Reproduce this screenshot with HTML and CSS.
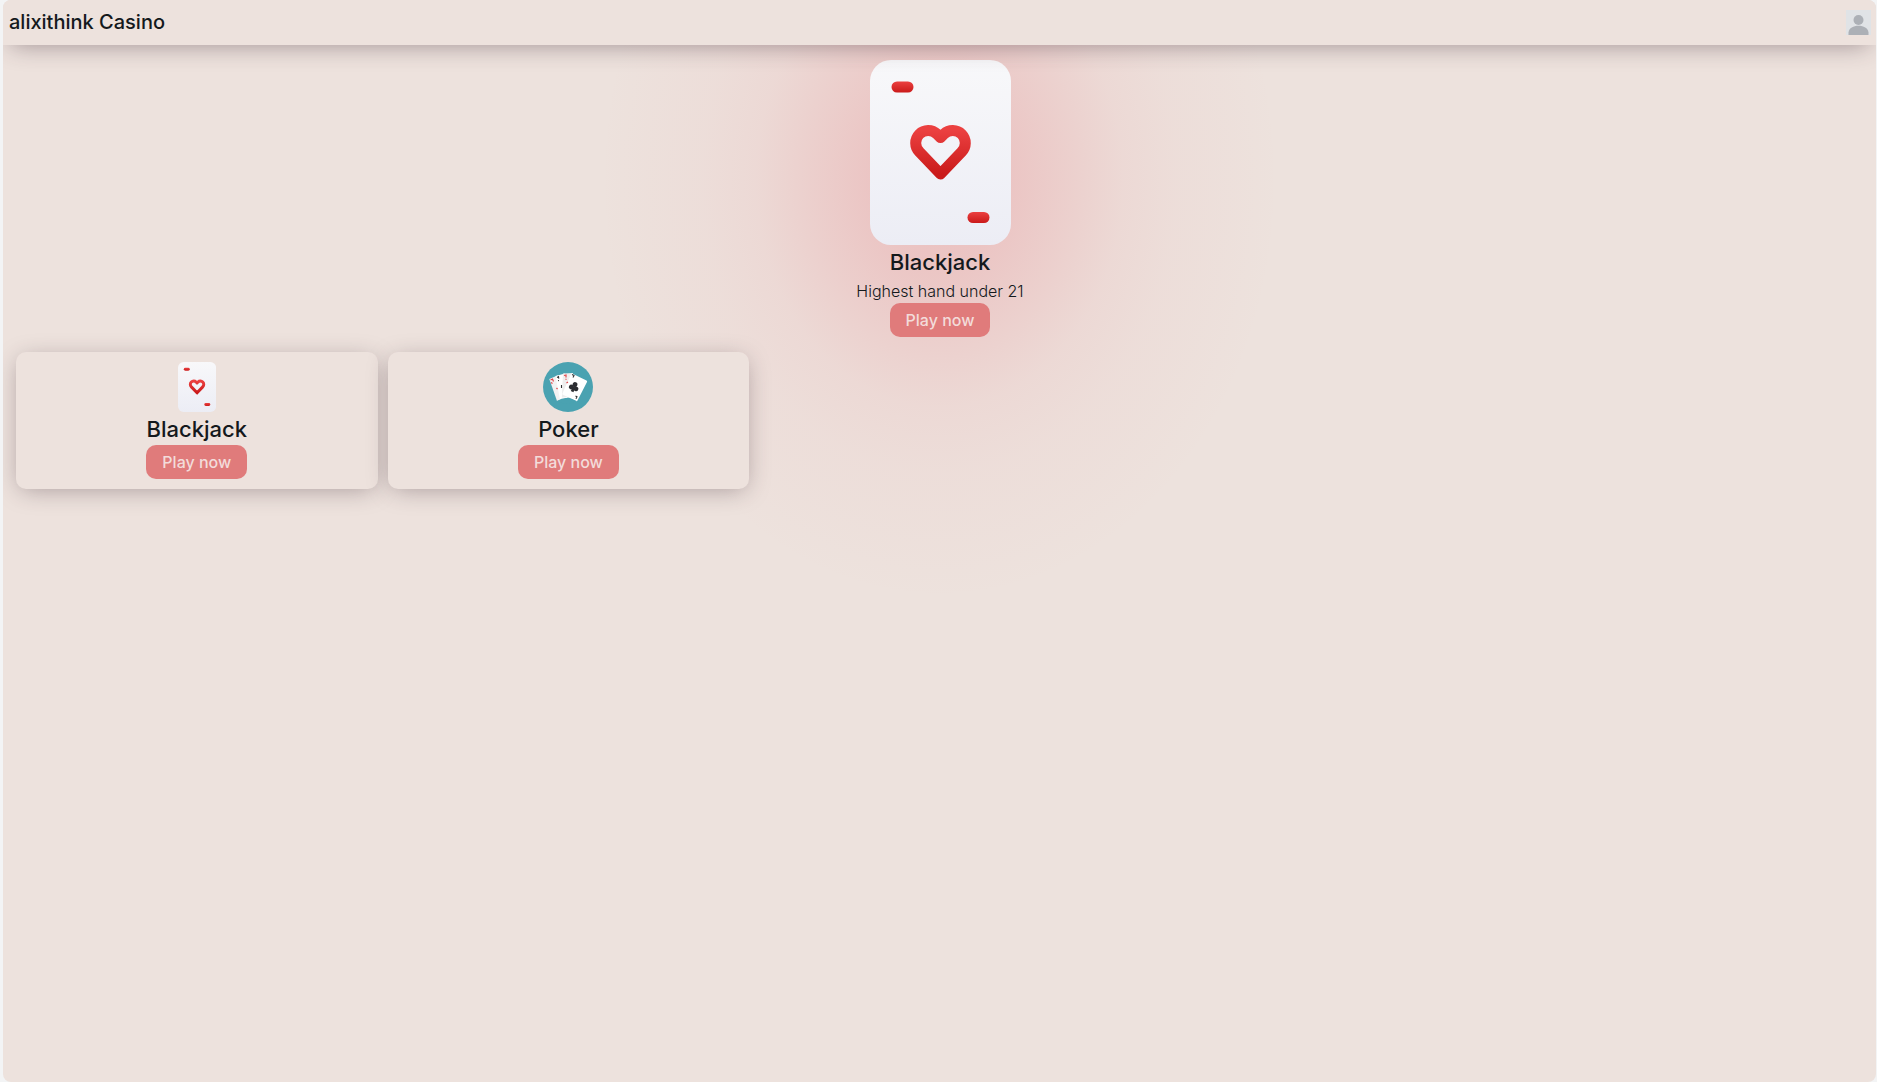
FILE: index.html
```html
<!DOCTYPE html>
<html lang="en">

<head>
    <meta charset="UTF-8">
    <meta name="viewport" content="width=device-width, initial-scale=1.0">
    <title>alixithink Casino</title>
    <link rel="stylesheet" href="styles.css">
</head>

<body>

    <!-- shared artwork -->
    <svg class="defs" width="0" height="0" aria-hidden="true">
        <defs>
            <linearGradient id="paper" x1="0" y1="0" x2="0" y2="1">
                <stop offset="0" stop-color="#f8f8fa" />
                <stop offset="1" stop-color="#ecedf5" />
            </linearGradient>
            <linearGradient id="red" x1="0" y1="0" x2="0" y2="1">
                <stop offset="0" stop-color="#eb4040" />
                <stop offset="1" stop-color="#ca1a1a" />
            </linearGradient>
        </defs>
        <symbol id="blackjack" viewBox="0 0 141 185">
            <rect width="141" height="185" rx="21" fill="url(#paper)" />
            <rect x="21.5" y="21.5" width="22" height="11" rx="5.5" fill="url(#red)" />
            <rect x="97.5" y="152" width="22" height="11" rx="5.5" fill="url(#red)" />
            <path d="M70.5 77.5L67 74A12.5 12.5 0 0 0 49.5 92L70.5 114L91.5 92A12.5 12.5 0 0 0 74 74Z" fill="none" stroke="url(#red)" stroke-width="11" stroke-linejoin="round" />
        </symbol>
    </svg>

    <div class="page">
        <header class="navbar">
            <h1>alixithink Casino</h1>
            <svg class="avatar" viewBox="0 0 25 25" role="img" aria-label="Profile">
                <rect width="25" height="25" fill="#e0e3e6" />
                <circle cx="12.5" cy="10" r="5" fill="#acb0b6" />
                <path d="M2.5 25V22.500C3 18 7.500 15.800 12.500 15.800S22 18 22.500 22.500V25Z" fill="#acb0b6" />
            </svg>
        </header>

        <main>
            <section class="featured">
                <svg class="cover" role="img" aria-label="Playing card"><use href="#blackjack" /></svg>
                <h2>Blackjack</h2>
                <p>Highest hand under 21</p>
                <button type="button">Play now</button>
            </section>

            <section class="games">
                <article class="game">
                    <svg class="icon" viewBox="0 0 141 185" aria-hidden="true"><use href="#blackjack" /></svg>
                    <h2>Blackjack</h2>
                    <button type="button">Play now</button>
                </article>

                <article class="game">
                    <svg class="icon" viewBox="0 0 50 50" aria-hidden="true">
                        <circle cx="25" cy="25" r="25" fill="#4aa2b1" />
                        <path d="M6.300 17L15 13.200L24 35.500L14 39Z" fill="#f3f2f2" />
                        <path d="M12.500 14L22 11.500L27 35L17 37.500Z" fill="#fff" />
                        <path d="M20 11.500L30 11L29 35L18.800 35.500Z" fill="#eeeeee" />
                        <path d="M28.500 11.300L43.500 18.500Q44.500 19 44 20L34.500 38.500Q34 39.500 33 39L20 32.800Q19 32.300 19.500 31.300Z" fill="#fff" />
                        <path d="M14 39Q23 33 33.500 39Q24 44 14 39Z" fill="#4aa2b1" />
                        <g fill="none" stroke="#e0474c" stroke-width="1.200">
                            <path d="M7.500 18l2-1 1 2.500M8 20.500l1.500 1M21 13.500l2-.5v2.500M22.500 17l1 .5M23.500 21l1.500-1M13.500 26l1 1.200" />
                        </g>
                        <g fill="none" stroke="#333" stroke-width="1.100">
                            <path d="M14 15.500l1.500-.8.3 2M15 18.500l1 .2M29 12.500l2 1-1 2M18.500 23v3M32.500 34l1.500.8-1 2" />
                        </g>
                        <g fill="#2b2d31" transform="rotate(22 31 25)">
                            <circle cx="31" cy="22.300" r="2.400" />
                            <circle cx="28.500" cy="26" r="2.400" />
                            <circle cx="33.500" cy="26" r="2.400" />
                            <path d="M30.300 23h1.400L32.500 30h-3Z" />
                        </g>
                    </svg>
                    <h2>Poker</h2>
                    <button type="button">Play now</button>
                </article>
            </section>
        </main>
    </div>

</body>

</html>
```
FILE: styles.css
```css
* {
    box-sizing: border-box;
}

body {
    margin: 0;
    padding: 0 1px 0 3px;
    background-color: #f3f4f5;
    font-family: Inter, sans-serif;
    font-size: 16px;
    color: #14191c;
}

h1,
h2,
p {
    margin: 0;
}

.defs {
    position: absolute;
}

.page {
    display: flex;
    flex-direction: column;
    min-height: 100vh;
    border-radius: 8px;
    overflow: hidden;
    background-color: #ede2dd;
}

.navbar {
    display: flex;
    justify-content: space-between;
    align-items: center;
    height: 45px;
    padding: 0 5px 0 6px;
    background-color: #ede2dd;
    box-shadow: 0 8px 24px -8px rgba(60, 40, 50, 0.45);
    z-index: 1;
}

h1 {
    padding-bottom: 2px;
    font-size: 20px;
    font-weight: 500;
    line-height: 42px;
}

.avatar {
    width: 25px;
    height: 25px;
}

main {
    flex: 1;
    padding: 15px 12px 10px 13px;
    /* red glow behind the featured game */
    background-image: radial-gradient(ellipse 340px 420px at 50% 135px,
            rgba(230, 110, 120, 0.3) 0%,
            rgba(230, 110, 120, 0.25) 20%,
            rgba(230, 110, 120, 0.16) 38%,
            rgba(230, 110, 120, 0.08) 54%,
            rgba(230, 110, 120, 0.04) 70%,
            rgba(230, 110, 120, 0.02) 85%,
            rgba(230, 110, 120, 0) 100%);
}

.featured {
    display: flex;
    flex-direction: column;
    align-items: center;
    margin-bottom: 15px;
}

.cover {
    width: 141px;
    height: 185px;
}

h2 {
    padding-top: 2px;
    font-size: 22px;
    font-weight: 500;
    line-height: 31px;
}

.featured p {
    padding-top: 1px;
    font-weight: 300;
    line-height: 24px;
}

button {
    height: 34px;
    padding: 0 16px;
    border: none;
    border-radius: 10px;
    background-color: #e07b7b;
    color: #f3dcda;
    font-family: inherit;
    font-size: 16px;
    font-weight: 500;
    cursor: pointer;
}

button:hover {
    background-color: #d96c6c;
}

.games {
    display: grid;
    grid-template-columns: repeat(5, 1fr);
    gap: 10px;
}

.game {
    display: flex;
    flex-direction: column;
    align-items: center;
    padding: 10px;
    border-radius: 10px;
    background-color: #ede2dd;
    box-shadow: 0 4px 24px -4px rgba(60, 40, 50, 0.4);
}

.icon {
    height: 50px;
}

@media (max-width: 900px) {
    .games {
        grid-template-columns: repeat(2, 1fr);
    }
}
```
